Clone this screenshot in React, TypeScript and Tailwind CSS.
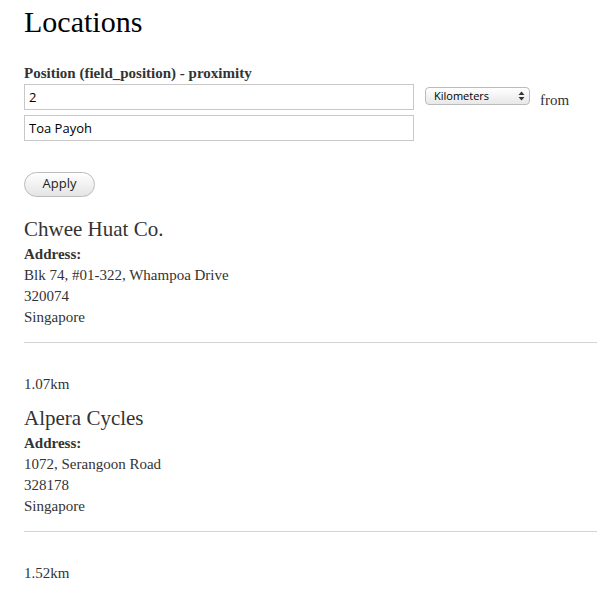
import React from 'react';

interface Location {
  name: string;
  street: string;
  postal: string;
  country: string;
  distance: string;
}

const locations: Location[] = [
  {
    name: 'Chwee Huat Co.',
    street: 'Blk 74, #01-322, Whampoa Drive',
    postal: '320074',
    country: 'Singapore',
    distance: '1.07km',
  },
  {
    name: 'Alpera Cycles',
    street: '1072, Serangoon Road',
    postal: '328178',
    country: 'Singapore',
    distance: '1.52km',
  },
];

const serif = { fontFamily: 'Georgia, "Liberation Serif", serif' };
const sans = { fontFamily: '"Open Sans", "DejaVu Sans", sans-serif' };

export default function App() {
  return (
    <div className="min-h-screen bg-white pl-6 text-[#333] text-[15px]" style={serif}>
      {/* Title */}
      <h1 className="pt-[4px] text-[30px] leading-[36px] text-black">Locations</h1>

      {/* Filter form */}
      <div className="mt-[24px]">
        <p className="text-[15px] font-bold leading-[18px]">Position (field_position) - proximity</p>
        <div className="mt-[2px] flex items-start">
          <input
            readOnly
            value="2"
            className="h-[26px] w-[390px] border border-[#c8c8c8] px-[4px] text-[13px] text-black outline-none"
            style={sans}
          />
          <div
            className="ml-[11px] mt-[3px] flex h-[18px] w-[105px] items-center justify-between rounded-[4px] border border-[#bbb] bg-gradient-to-b from-white to-[#e8e8e8] pl-[8px] pr-[4px] text-[11px] text-black"
            style={sans}
          >
            <span>Kilometers</span>
            <svg width="7" height="10" viewBox="0 0 7 10">
              <path d="M3.5 0.5 L6.5 4 H0.5 Z" fill="#333" />
              <path d="M3.5 9.5 L6.5 6 H0.5 Z" fill="#333" />
            </svg>
          </div>
          <span className="ml-[10px] mt-[5px] text-[15px]">from</span>
        </div>
        <input
          readOnly
          value="Toa Payoh"
          className="mt-[3px] block h-[26px] w-[390px] border border-[#c8c8c8] px-[4px] text-[13px] text-black outline-none"
          style={sans}
        />
      </div>

      <button
        className="mt-[31px] h-[25px] w-[71px] rounded-full border border-[#bbb] bg-gradient-to-b from-white to-[#e4e4e4] text-[13px] text-[#222]"
        style={sans}
      >
        Apply
      </button>

      {/* Results */}
      <div className="mt-[19px]">
        {locations.map((loc) => (
          <div key={loc.name}>
            <h2 className="text-[21px] leading-[26px]">{loc.name}</h2>
            <p className="mt-[2px] font-bold leading-[21px]">Address:</p>
            <p className="leading-[21px]">{loc.street}</p>
            <p className="leading-[21px]">{loc.postal}</p>
            <p className="leading-[21px]">{loc.country}</p>
            <hr className="mt-[14px] border-t border-[#d4d4d4]" />
            <p className="mt-[31px] leading-[21px]">{loc.distance}</p>
            <div className="h-[10px]" />
          </div>
        ))}
      </div>
    </div>
  );
}
